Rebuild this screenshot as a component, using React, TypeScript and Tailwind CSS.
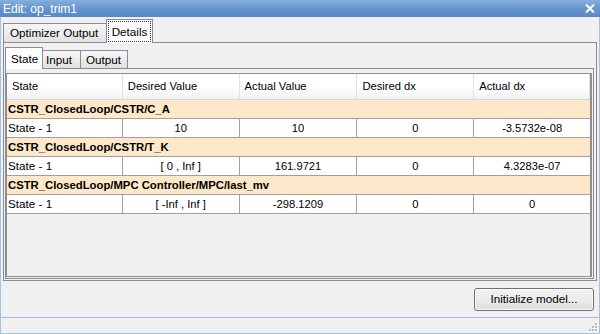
import React from "react";

const groups = [
  { name: "CSTR_ClosedLoop/CSTR/C_A", row: ["State - 1", "10", "10", "0", "-3.5732e-08"] },
  { name: "CSTR_ClosedLoop/CSTR/T_K", row: ["State - 1", "[ 0 , Inf ]", "161.9721", "0", "4.3283e-07"] },
  { name: "CSTR_ClosedLoop/MPC Controller/MPC/last_mv", row: ["State - 1", "[ -Inf , Inf ]", "-298.1209", "0", "0"] },
];

const headers = ["State", "Desired Value", "Actual Value", "Desired dx", "Actual dx"];
const widths = ["w-[116px]", "w-[117px]", "w-[118px]", "w-[117px]", "w-[116px]"];

export default function App() {
  return (
    <div className="w-[600px] h-[334px] flex flex-col bg-[#f0f0f0] font-['Liberation_Sans',Arial,sans-serif] text-[11.2px] text-black overflow-hidden">
      {/* Title bar */}
      <div className="h-[17px] shrink-0 flex items-center justify-between pl-[3px] pr-[5px] bg-gradient-to-b from-[#86afde] via-[#6795d0] to-[#5987c4] text-white text-[12px] leading-none">
        <span>Edit: op_trim1</span>
        <svg width="10" height="9" viewBox="0 0 10 9">
          <path d="M1 0.5 L9 8.5 M9 0.5 L1 8.5" stroke="#ffffff" strokeWidth="2" />
        </svg>
      </div>

      {/* Body */}
      <div className="flex-1 min-h-0 flex flex-col border-l border-r border-b border-[#a7c1de]">
        <div className="flex flex-col px-[2px] pt-[1px]">
          {/* Outer tabs */}
          <div className="h-[24px] flex items-end">
            <div className="h-[19px] w-[104px] border border-b-0 border-[#898c95] bg-gradient-to-b from-[#f7f7f7] to-[#e1e1e1] flex items-center pl-[6px] text-[11.7px]">
              Optimizer Output
            </div>
            <div className="relative z-10 -mb-px -ml-px h-[24px] w-[47px] border border-b-0 border-[#898c95] bg-white p-[1px]">
              <div className="h-full w-full border border-dotted border-[#333] flex items-center justify-center text-[11.7px]">
                Details
              </div>
            </div>
          </div>

          {/* Outer panel */}
          <div className="h-[239px] border border-[#898c95] bg-[#f0f0f0] pl-[1px] pr-[2px] pb-[1px] flex flex-col">
            {/* Inner tabs */}
            <div className="h-[25px] flex items-end">
              <div className="relative z-10 -mb-px h-[22px] w-[38px] border border-b-0 border-[#898c95] bg-white flex items-center pl-[5px] text-[11.7px]">
                State
              </div>
              <div className="h-[18px] w-[38px] border border-b-0 border-l-0 border-[#898c95] bg-gradient-to-b from-[#f7f7f7] to-[#e1e1e1] flex items-center pl-[3px] text-[11.7px]">
                Input
              </div>
              <div className="h-[18px] w-[47px] border border-b-0 border-l-0 border-[#898c95] bg-gradient-to-b from-[#f7f7f7] to-[#e1e1e1] flex items-center pl-[5px] text-[11.7px]">
                Output
              </div>
            </div>

            {/* Inner panel */}
            <div className="flex-1 border border-[#898c95] bg-[#f0f0f0] pt-[4px] pr-[1px] pb-[1px] flex flex-col">
              {/* Table */}
              <div className="flex-1 border border-[#8e8f8f] border-r-2 bg-[#f0f0f0] flex flex-col">
                {/* Header */}
                <div className="h-[26px] flex bg-gradient-to-b from-white via-white to-[#f1f2f4] border-b border-[#d5d5d5]">
                  {headers.map((h, i) => (
                    <div
                      key={h}
                      className={`${widths[i]} h-full flex items-center pl-[5px] border-r border-[#e2e3e5]`}
                    >
                      {h}
                    </div>
                  ))}
                </div>
                {/* Rows */}
                {groups.map((g) => (
                  <React.Fragment key={g.name}>
                    <div className="h-[19px] flex items-center pl-[1px] bg-[#fde9c9] border-b border-[#a0a0a0] font-bold text-[11.3px]">
                      {g.name}
                    </div>
                    <div className="h-[19px] flex bg-white border-b border-[#a0a0a0]">
                      {g.row.map((c, i) => (
                        <div
                          key={i}
                          className={`${widths[i]} h-full flex items-center ${
                            i === 0 ? "pl-[1px] text-[11.7px]" : "justify-center"
                          } ${i < 4 ? "border-r border-[#a0a0a0]" : ""}`}
                        >
                          {c}
                        </div>
                      ))}
                    </div>
                  </React.Fragment>
                ))}
              </div>
            </div>
          </div>
        </div>

        {/* Button area */}
        <div className="h-[36px] shrink-0 flex items-center justify-end pr-[5px]">
          <button className="h-[23px] w-[120px] rounded-[3px] border border-[#707070] bg-gradient-to-b from-[#f3f3f3] via-[#ebebeb] to-[#dddddd] text-[11.7px] flex items-center justify-center shadow-[inset_0_0_0_1px_#fcfcfc]">
            Initialize model...
          </button>
        </div>

        {/* Status strip */}
        <div className="flex-1 border-t border-[#a7c1de] flex items-end justify-end">
          <svg width="10" height="10" viewBox="0 0 10 10" className="mb-[1px] mr-[1px]">
            {[
              [7, 1],
              [4, 4],
              [7, 4],
              [1, 7],
              [4, 7],
              [7, 7],
            ].map(([x, y], i) => (
              <g key={i}>
                <rect x={x + 1} y={y + 1} width="2" height="2" fill="#ffffff" />
                <rect x={x} y={y} width="2" height="2" fill="#b8b8b8" />
              </g>
            ))}
          </svg>
        </div>
      </div>
    </div>
  );
}
